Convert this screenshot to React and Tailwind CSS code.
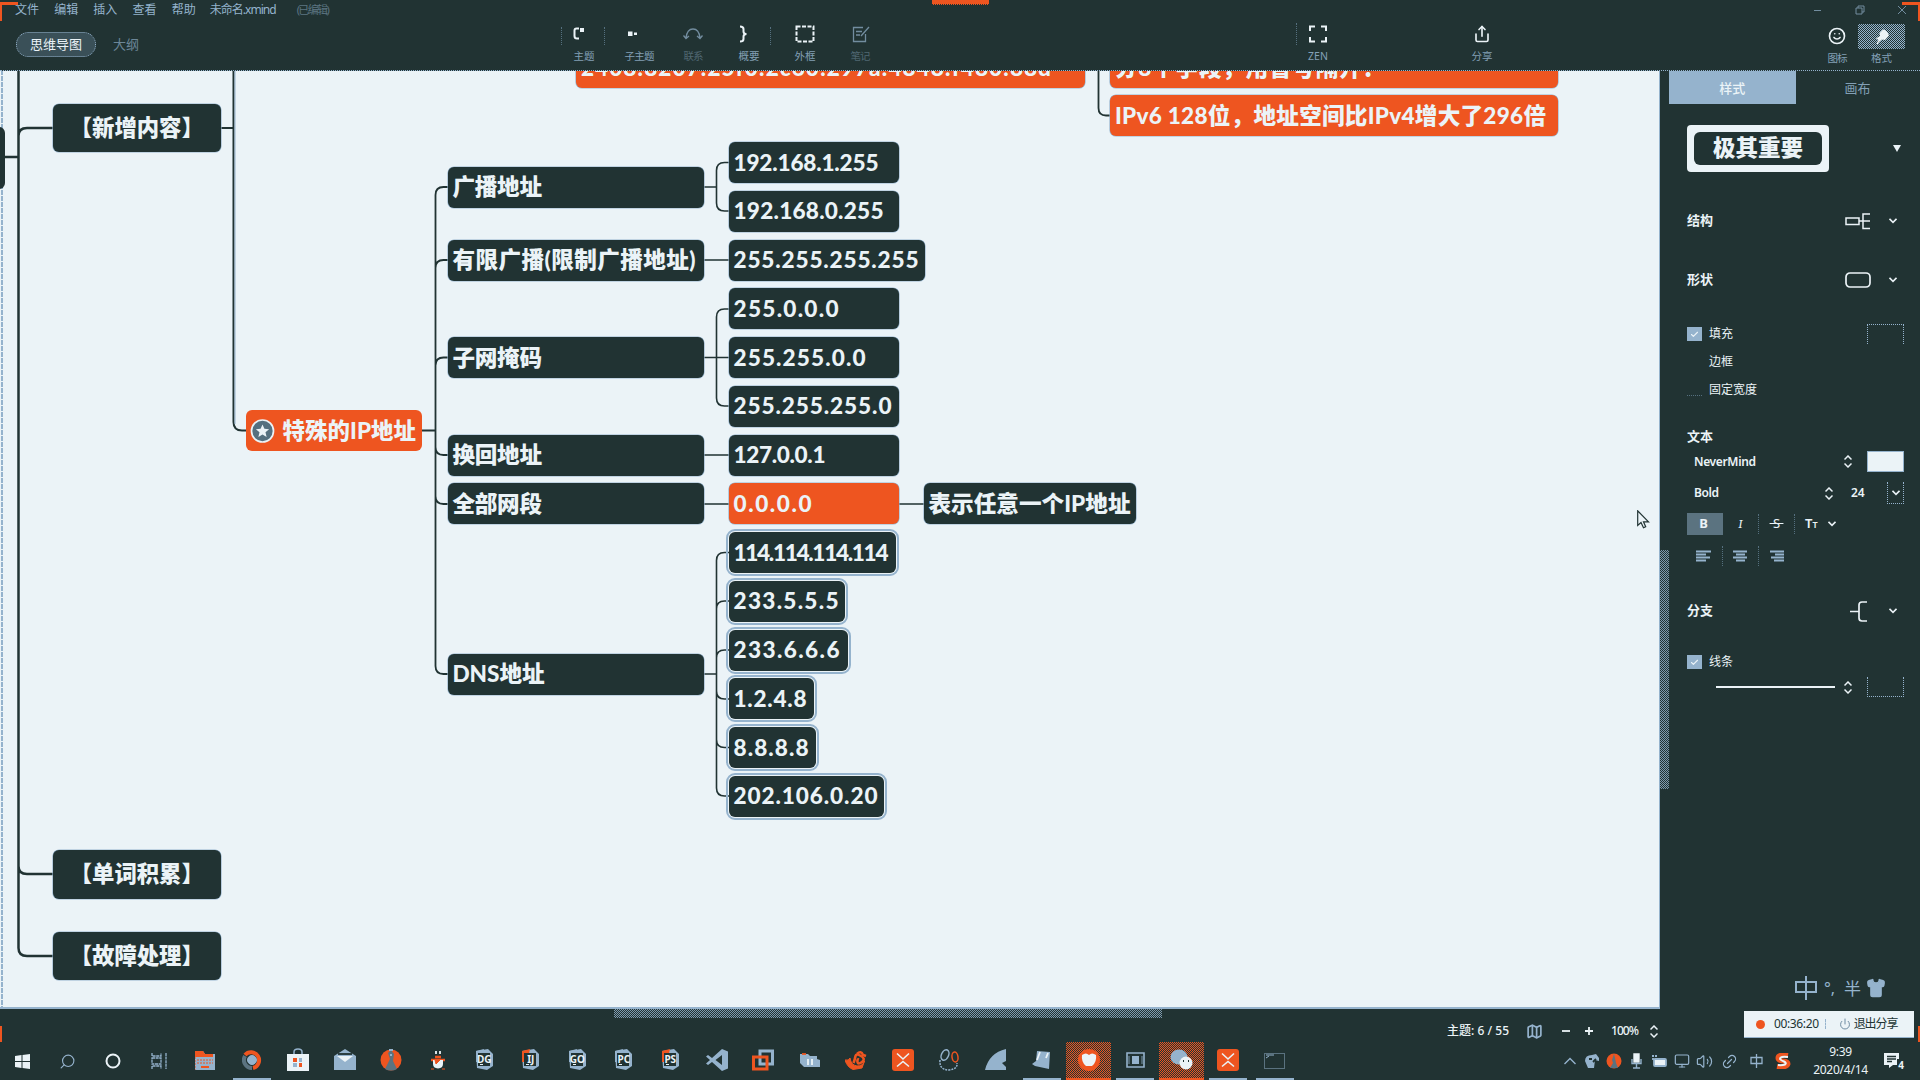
import React, { useLayoutEffect, useRef } from "react";
import { Share, Smile, Map as MapIcon, Search, Check, Power, Monitor, Volume2, Link2, Shirt } from "lucide-react";

const CHECKER = "bg-[repeating-conic-gradient(#95b3cd_0_25%,#213333_0_50%)] bg-[length:2px_2px]";
const CHECKER_ORANGE = "bg-[repeating-conic-gradient(#ee5520_0_25%,#213333_0_50%)] bg-[length:2px_2px]";

/* Text tracked so that it spans the given width. */
function Fit({ w, children, className = "" }) {
  const ref = useRef(null);
  useLayoutEffect(() => {
    const el = ref.current;
    el.style.letterSpacing = "0px";
    const n = Array.from(children).length;
    if (w && n > 1) el.style.letterSpacing = (w - el.getBoundingClientRect().width) / (n - 1) + "px";
  }, [w, children]);
  return <span ref={ref} className={"inline-block whitespace-pre " + className}>{children}</span>;
}

const NODES = [
  ["2408:8207:25f0:2c60:297a:4848:f480:88d", 576, 47, 509, 41, 470, "o"],
  ["分8个字段，用冒号隔开：", 1110, 47, 447.5, 41, 270, "o"],
  ["IPv6 128位，地址空间比IPv4增大了296倍", 1110, 95, 447.5, 41, 431, "o"],
  ["广播地址", 447.5, 166.5, 256.5, 41, 89.5],
  ["有限广播(限制广播地址)", 447.5, 239.5, 256.5, 41, 243],
  ["子网掩码", 447.5, 337, 256.5, 41, 89.5],
  ["换回地址", 447.5, 434.5, 256.5, 41, 89.5],
  ["全部网段", 447.5, 483.3, 256.5, 41, 89.5],
  ["DNS地址", 447.5, 653.8, 256.5, 41, 92],
  ["192.168.1.255", 728.5, 142, 170.5, 41, 145],
  ["192.168.0.255", 728.5, 190.7, 170.5, 41, 150],
  ["255.255.255.255", 728.5, 239.5, 196.5, 41, 185],
  ["255.0.0.0", 728.5, 288.2, 170.5, 41, 105],
  ["255.255.0.0", 728.5, 337, 170.5, 41, 132],
  ["255.255.255.0", 728.5, 385.7, 170.5, 41, 158],
  ["127.0.0.1", 728.5, 434.5, 170.5, 41, 92],
  ["0.0.0.0", 728.5, 483.3, 170.5, 41, 78, "o"],
  ["表示任意一个IP地址", 923.5, 483.3, 212.5, 41, 202],
  ["114.114.114.114", 728.5, 532, 167, 41, 155, "s"],
  ["233.5.5.5", 728.5, 580.7, 116, 41, 105, "s"],
  ["233.6.6.6", 728.5, 629.5, 119, 41, 106, "s"],
  ["1.2.4.8", 728.5, 678.2, 85, 41, 73, "s"],
  ["8.8.8.8", 728.5, 727, 87, 41, 75, "s"],
  ["202.106.0.20", 728.5, 775.8, 155.5, 41, 144, "s"],
];
const TOPICS = [["【新增内容】", 103.5], ["【单词积累】", 850], ["【故障处理】", 931.5]];

function Canvas() {
  const branch = (x0, x, x1, y0, ys) =>
    ys.map((y) => Math.abs(y - y0) < 2 ? `M${x0} ${y}H${x1}` : `M${x0} ${y0}H${x}V${y < y0 ? y + 8 : y - 8}Q${x} ${y} ${x + 8} ${y}H${x1}`).join("");
  return (
    <div className="relative w-[1660px] h-full bg-[#ebf3f7] overflow-hidden border-r border-b-2 border-[#95b3cd]">
      <div className="absolute left-0 -top-[71px] w-[1660px] h-[1080px] font-['Lato','Noto_Sans_CJK_SC',sans-serif] font-black text-[#ebf3f7]">
        <svg className="absolute inset-0" width="1660" height="1080" fill="none" stroke="#213333">
          <path d="M2 70V1008" stroke="#95b3cd" strokeWidth="2" strokeDasharray="5 1" />
          <path d="M18.5 60V948Q18.5 956 27 956H53M18.5 866Q18.5 874 27 874H53M18.5 136Q18.5 128 27 128H53M5 157H18" strokeWidth="2.5" />
          <path d="M221 128H233M233.500 60V422Q233.500 430.500 242 430.500H247" strokeWidth="2" />
          <path d="M235 70V424" stroke="#95b3cd" strokeWidth="1" />
          <path strokeWidth="1.8" d={branch(422, 435.500, 448, 430.500, [187, 260, 357.500, 455, 504, 674])} />
          <path strokeWidth="1.6" d={branch(704, 716.500, 729, 187, [162.500, 211]) + branch(704, 716, 729, 260, [260]) + branch(704, 716.500, 729, 357.500, [309, 357.500, 406]) + branch(704, 716, 729, 455, [455]) + branch(704, 716, 729, 504, [504]) + branch(899, 910, 924, 504, [504]) + branch(704, 716.500, 729, 674, [552.500, 601, 650, 699, 747.500, 796])} />
          <path d="M1098.500 60V108Q1098.500 115.500 1106 115.500H1111" strokeWidth="1.8" />
        </svg>
        <div className="absolute -left-5 top-[127px] w-[25px] h-[62px] rounded-md bg-[#213333]" />
        {TOPICS.map(([t, y]) => (
          <div key={t} className="absolute left-[52.5px] w-[168.5px] h-[48.5px] rounded-md bg-[#213333] shadow-[0_0_0_0.6px_#95b3cd] flex items-center justify-center text-[22.4px]" style={{ top: y }}>
            <Fit w={134}>{t}</Fit>
          </div>
        ))}
        <div className="absolute left-[246px] top-[410px] w-[176px] h-[41px] rounded-md bg-[#ee5520] flex items-center pl-[4px] text-[22.4px]">
          <svg width="26" height="26" viewBox="0 0 26 26"><circle cx="12.500" cy="13" r="11" fill="#55707f" stroke="#ebf3f7" strokeWidth="1.700" /><path d="M12.500 6.500l1.900 4.300 4.700.4-3.600 3.100 1.100 4.600-4.100-2.500-4.100 2.500 1.100-4.600-3.600-3.100 4.700-.4z" fill="#ebf3f7" /></svg>
          <Fit w={133.5} className="ml-[6.5px]">特殊的IP地址</Fit>
        </div>
        {NODES.map(([t, x, y, w, h, tw, kind]) => (
          <div key={t} className={"absolute rounded-md flex items-center pl-[5px] text-[22.6px] " + (kind === "o" ? "bg-[#ee5520]" : "bg-[#213333]") + (kind === "s" ? " outline outline-2 outline-offset-[1.5px] outline-[#95b3cd]" : " shadow-[0_0_0_0.6px_#95b3cd]")} style={{ left: x, top: y, width: w, height: h }}>
            <Fit w={tw}>{t}</Fit>
          </div>
        ))}
        <svg className="absolute left-[1637px] top-[510px]" width="13" height="19" viewBox="0 0 13 19"><path d="M.7 .8V15.500L4 12.500 6.500 17.800 8.700 16.700 6.500 11.800H11.500z" fill="#ebf3f7" stroke="#213333" strokeWidth="1.200" /></svg>
      </div>
    </div>
  );
}

const Tool = ({ icon, label, className, dim, tw }) => (
  <div className={"flex flex-col items-center h-[48px] pt-[2px] " + className}>
    <div className={"h-[20px] flex items-center justify-center " + (dim ? "text-[#95b3cd] opacity-70" : "text-[#ebf3f7]")}>{icon}</div>
    <div className={"mt-[5px] text-[10.5px] leading-[14px] text-[#95b3cd] whitespace-nowrap " + (dim ? "opacity-40" : "opacity-85")}><Fit w={tw}>{label}</Fit></div>
  </div>
);
const S = ({ children, w = 20, h = 20, sw = 1.8, className = "" }) => (
  <svg width={w} height={h} viewBox={`0 0 ${w} ${h}`} fill="none" stroke="currentColor" strokeWidth={sw} className={className}>{children}</svg>
);
const DOT = "border-dotted border-[#55707f]";

function Header() {
  return (
    <header className="h-[71px] flex flex-col border-b border-dotted border-[#95b3cd]">
      <div className="h-[20px] flex items-center text-[12px] text-[#95b3cd]">
        {["文件", "编辑", "插入", "查看", "帮助"].map((m, i) => <div key={m} className={i ? "ml-[15.2px]" : "ml-[15px]"}><Fit w={24}>{m}</Fit></div>)}
        <div className="ml-[14px]"><Fit w={67}>未命名.xmind</Fit></div>
        <div className="ml-[21px] text-[11px] opacity-50"><Fit w={33}>(已编辑)</Fit></div>
        <div className="ml-auto flex items-center mr-[13px] opacity-70">
          <S w={8} h={10} sw={1}><path d="M0 5.500H7" /></S>
          <S w={10} h={10} sw={1} className="ml-[33px]"><path d="M1 3H7V9H1zM3 3V1H9V7H7" /></S>
          <S w={10} h={10} sw={1} className="ml-[32px]"><path d="M1 1L9 9M9 1L1 9" /></S>
        </div>
      </div>
      <div className="h-[50px] flex items-start pt-[2px]">
        <div className="ml-[16px] mt-[10px] w-[80px] h-[25px] rounded-full border border-dotted border-[#95b3cd] bg-[#3a5058] flex items-center justify-center text-[13px] text-[#ebf3f7]"><Fit w={52}>思维导图</Fit></div>
        <div className="ml-[17px] mt-[12px] text-[13px] leading-[20px] text-[#95b3cd] opacity-65">大纲</div>
        <div className="ml-[422px] flex relative">
          <Tool className="w-[46px]" tw={21} label="主题" icon={<S sw={2} className="mr-[8px]"><path d="M9 4.500H6.500Q4.500 4.500 4.500 6.500V12Q4.500 14.500 7 14.500H9" /><path d="M10 4H14V8H10z" fill="currentColor" stroke="none" /></S>} />
          <Tool className="w-[64px]" tw={30} label="子主题" icon={<S sw={2} className="mr-[8px]"><path d="M3 7.500H7.500V12H3zM9 8.500H12V11H9z" fill="currentColor" stroke="none" /></S>} />
          <Tool className="w-[44px]" tw={20} label="联系" dim icon={<S sw={1.3}><path d="M3 14Q4 5 10 5T17 14M.5 11.500L3 14.500 6 12M14 12L17 14.500 19.500 11.500" /></S>} />
          <Tool className="w-[68px]" tw={21} label="概要" icon={<S sw={2} className="mr-[8px]"><path d="M5 2.500Q8.500 2.500 8.500 5V7.500Q8.500 10 11.500 10Q8.500 10 8.500 12.500V15Q8.500 17.500 5 17.500" /></S>} />
          <Tool className="w-[44px]" tw={21} label="外框" icon={<S sw={2}><rect x="1.500" y="2.500" width="17" height="15" strokeDasharray="4 1.500" /></S>} />
          <Tool className="w-[66px]" tw={20} label="笔记" dim icon={<S sw={1.3}><path d="M13 3.500H3.500V17.500H15.500V10M19 3L11 12M6 7.500H12M6 11H10" /></S>} />
          <i className={"absolute left-0 top-[5px] h-[18px] border-l " + DOT} />
          <i className={"absolute left-[43px] top-[5px] h-[18px] border-l " + DOT} />
          <i className={"absolute left-[209px] top-[5px] h-[18px] border-l " + DOT} />
        </div>
        <i className={"ml-[403px] mt-[1px] h-[22px] border-l " + DOT} />
        <Tool className="-ml-[2px] w-[46px]" tw={20} label="ZEN" icon={<S sw={2}><path d="M2 7V2.500H7M13 2.500H18V7M18 13V17.500H13M7 17.500H2V13" /></S>} />
        <Tool className="ml-[118px] w-[46px]" tw={21} label="分享" icon={<Share size={18} strokeWidth={2.2} />} />
        <Tool className="ml-[311px] w-[42px] mt-[2px]" tw={20} label="图标" icon={<Smile size={18} strokeWidth={2.2} />} />
        <div className="mt-[2px] w-[47px] flex flex-col items-center text-[10.5px] leading-[14px] text-[#95b3cd]">
          <div className={"w-[47px] h-[25px] flex items-center justify-center text-[#ebf3f7] " + CHECKER}><S w={16} h={16}><path d="M9 .5Q13 1 15 6.500L11 11 8 10.500 5 13 3.500 15.500 2.500 14.500 4.500 11 2 9.500 6 7 5.500 4z" fill="currentColor" stroke="none" /></S></div>
          <span className="mt-[2px] opacity-85">格式</span>
        </div>
      </div>
    </header>
  );
}

const Down = ({ className = "" }) => <S w={8} h={6} sw={1.6} className={className}><path d="M.5 .8L4 4.300 7.500 .8" /></S>;
const Step = ({ className = "" }) => <S w={8} h={13} sw={1.5} className={className}><path d="M.5 4.500L4 1 7.500 4.500M.5 8.500L4 12 7.500 8.500" /></S>;
const Box = () => <div className="w-[15px] h-[14px] bg-[#95b3cd] flex items-center justify-center text-[#ebf3f7]"><Check size={9} strokeWidth={3} /></div>;
const Align = ({ d, className }) => <S w={16} h={12} sw={2} className={"text-[#95b3cd] " + className}><path d={d} /></S>;

function Panel() {
  return (
    <aside className="w-[260px] flex text-[#ebf3f7]">
      <div className="w-[9px] pt-[479px]"><div className={"w-[9px] h-[239px] opacity-80 " + CHECKER} /></div>
      <div className="w-[251px] flex flex-col">
        <div className="flex h-[33px] items-center text-[13px]">
          <div className="w-[126.5px] h-[33px] pt-[2px] bg-[#95b3cd] flex items-center justify-center font-medium">样式</div>
          <div className="w-[124px] pt-[2px] text-center text-[#95b3cd] opacity-85">画布</div>
        </div>
        <div className="mt-[21px] ml-[18px] mr-[19px] flex items-center justify-between">
          <div className="w-[142px] h-[46.5px] rounded bg-[#ebf3f7] flex items-center justify-center">
            <div className="w-[128px] h-[33px] rounded-md bg-[#213333] flex items-center justify-center text-[22.5px] font-black"><Fit w={90}>极其重要</Fit></div>
          </div>
          <S w={8} h={7}><path d="M0 0H8L4 7z" fill="currentColor" stroke="none" /></S>
        </div>
        <div className="mt-[39px] ml-[18px] mr-[23px] h-[20px] flex items-center font-bold text-[13px]">
          <Fit w={26}>结构</Fit>
          <S w={26} h={18} sw={1.5} className="ml-auto"><path d="M1 6H14V12.500H1zM14 9H25M25 2H18V16.500H25" /></S>
          <Down className="ml-[18px]" />
        </div>
        <div className="mt-[39.5px] ml-[18px] mr-[23px] h-[20px] flex items-center font-bold text-[13px]">
          <Fit w={26}>形状</Fit>
          <S w={26} h={16} sw={1.7} className="ml-auto"><rect x="1" y="1" width="24" height="14" rx="4" /></S>
          <Down className="ml-[18px]" />
        </div>
        <div className="mt-[34px] ml-[18px] mr-[16px] h-[20px] flex items-center text-[12px]">
          <Box /><span className="ml-[7px]">填充</span>
          <div className="ml-auto w-[37px] h-[20px] border border-dotted border-[#95b3cd] border-b-0" />
        </div>
        <div className="mt-[8px] ml-[40px] h-[20px] leading-[20px] text-[12px]">边框</div>
        <div className="mt-[8px] ml-[18px] h-[20px] flex items-center text-[12px]">
          <i className="w-[15px] h-[12px] border-b border-dotted border-[#55707f]" /><span className="ml-[7px]">固定宽度</span>
        </div>
        <div className="mt-[26px] ml-[18px] h-[20px] leading-[20px] text-[13px] font-bold">文本</div>
        <div className="mt-[5px] ml-[25px] mr-[16px] h-[21px] flex items-center text-[12px] font-semibold">
          <Fit w={62}>NeverMind</Fit><Step className="ml-auto" />
          <div className="ml-[15px] w-[37px] h-[21px] bg-[#ebf3f7] border border-[#95b3cd]" />
        </div>
        <div className="mt-[10px] ml-[25px] mr-[16px] h-[22px] flex items-center text-[12px] font-semibold">
          <Fit w={25}>Bold</Fit><Step className="ml-auto" />
          <span className="ml-[18px] w-[16px]">24</span>
          <div className="ml-[20px] w-[17px] h-[22px] border border-dotted border-[#95b3cd] border-t-0 flex items-center justify-center"><Down /></div>
        </div>
        <div className="mt-[9px] ml-[18px] h-[22px] flex items-center text-[13px]">
          <div className="w-[36px] h-[22px] bg-[#5b7380] flex items-center justify-center pr-[3px] font-bold">B</div>
          <div className={"w-[36px] h-[20px] flex items-center justify-center border-r italic font-serif " + DOT}>I</div>
          <div className={"w-[36px] h-[20px] flex items-center justify-center border-r " + DOT}><span className="line-through">&nbsp;S&nbsp;</span></div>
          <div className="ml-[10px] flex items-baseline font-semibold">T<span className="text-[9px]">T</span></div>
          <Down className="ml-[10px]" />
        </div>
        <div className="mt-[11px] ml-[18px] h-[20px] flex items-center">
          <div className={"w-[36px] h-[20px] border-r flex items-center pl-[9px] " + DOT}><Align d="M0 1.500H15M0 4.500H10M0 7.500H14M0 10.500H10" /></div>
          <div className={"w-[36px] h-[20px] border-r flex items-center pl-[10px] " + DOT}><Align d="M0 1.500H14M3 4.500H12M0 7.500H14M3 10.500H12" /></div>
          <div className="pl-[11px]"><Align d="M0 1.500H14M5 4.500H14M1 7.500H14M4 10.500H14" /></div>
        </div>
        <div className="mt-[34px] ml-[18px] mr-[23px] h-[22px] flex items-center font-bold text-[13px]">
          <Fit w={26}>分支</Fit>
          <S w={18} h={21} sw={1.7} className="ml-auto"><path d="M0 10.500H9M17 1H12Q9 1 9 4V17Q9 20 12 20H17" /></S>
          <Down className="ml-[21px]" />
        </div>
        <div className="mt-[30px] ml-[18px] h-[20px] flex items-center text-[12px]"><Box /><span className="ml-[7px]">线条</span></div>
        <div className="mt-[5px] ml-[47px] mr-[16px] h-[20px] flex items-center">
          <div className="w-[119px] h-[2px] bg-[#ebf3f7]" /><Step className="ml-[9px]" />
          <div className="ml-auto w-[37px] h-[20px] border border-dotted border-[#95b3cd] border-t-0" />
        </div>
        <div className="mt-[279px] ml-[126px] h-[24px] flex items-center text-[#95b3cd]">
          <S w={22} h={24} sw={2}><path d="M1 6H21V16H1zM11 0V24" /></S>
          <span className="ml-[7px] text-[16px] leading-none w-[20px]">°,</span>
          <span className="text-[17px] leading-none w-[17px]">半</span>
          <Shirt size={20} fill="currentColor" className="ml-[5px]" />
        </div>
        <div className="mt-[11px] ml-[75px] w-[170px] h-[27px] bg-[#ebf3f7] border-b border-[#95b3cd] flex items-center text-[12px] text-[#213333]">
          <i className="ml-[12px] w-[9px] h-[9px] rounded-full bg-[#ee5520]" />
          <Fit w={45} className="ml-[9px]">00:36:20</Fit>
          <i className="ml-[6px] h-[10px] border-l border-dashed border-[#95b3cd]" />
          <Power size={12} strokeWidth={2} className="ml-[13px] text-[#6f8ca3]" />
          <Fit w={45} className="ml-[3px]">退出分享</Fit>
        </div>
      </div>
    </aside>
  );
}

const JB = ({ t, c = "#95b3cd" }) => (
  <div className="relative w-[19px] h-[22px] flex items-center justify-center">
    <svg className="absolute inset-0" width="19" height="22" viewBox="0 0 19 22"><path d="M1 2L13 0 18 5V17L12 21 2 19z" fill="#95b3cd" /><path d="M1 2L9 0 6 13H1z" fill={c} /><path d="M3 4H15V17H3z" fill="#213333" /><path d="M5 15.500H8" stroke="#ebf3f7" /></svg>
    <span className="relative text-[10px] font-bold text-[#ebf3f7] leading-none -mt-[3px]">{t}</span>
  </div>
);
const XM = () => <S w={22} h={22} sw={1.6} className="text-[#ebf3f7]"><rect width="22" height="22" rx="3" fill="#ee5520" stroke="none" /><path d="M5 4.500L11 10 17 4.500M5 17.500L11 12.500 17 17.500" /></S>;
const O = "#ee5520", B = "#95b3cd", W = "#ebf3f7", D = "#213333";

const APPS = [
  [<S w={20} h={22} sw={1}><path d="M0 2H8L10 5H20V21H0z" fill={B} stroke="none" /><path d="M0 2H8L10 5H18V8H0z" fill={O} stroke="none" /><path d="M0 8V21M2 11H18M2 14H18" stroke={O} strokeDasharray="2 1" /><path d="M6 18H14" stroke={O} strokeWidth="2" /></S>],
  [<S w={20} h={22} sw={4}><path d="M3 6A8 8 0 1 1 11 19" stroke={O} /><path d="M3 7A8 8 0 0 0 10 19" stroke="#5b7380" /><circle cx="10" cy="11" r="4.500" fill={B} stroke={B} strokeWidth="1" /></S>, "b"],
  [<S w={22} h={24} sw={1.5}><path d="M7 7V4Q7 1 11 1T15 4V7" stroke={B} /><path d="M0 6H22V23H0z" fill={W} stroke="none" /><path d="M6 10H10V14H6zM12 15H15V19H12z" fill={O} stroke="none" /><path d="M12 10H15V14H12zM6 15H10V19H6z" fill={B} stroke="none" /></S>],
  [<S w={22} h={22}><path d="M0 7L11 0 22 7V21H0z" fill={B} stroke="none" /><path d="M3 7H19L11 13z" fill={W} stroke="none" /><path d="M4 5H18" stroke={D} /></S>],
  [<S w={22} h={22}><circle cx="11" cy="11" r="10.500" fill={O} stroke="none" /><path d="M11 1L8 4 10 10 5 20Q11 23 17 20L13 12 14 5z" fill="#5b7380" stroke="none" /><path d="M9 1H13M10 6H12" stroke={B} /></S>],
  [<S w={16} h={20}><path d="M6 1V4M10 1V4" stroke={W} /><path d="M5 7H11M1 10H15" stroke={O} strokeWidth="2.500" /><path d="M3 10H13V14Q13 18 8 18.500 3 18 3 14z" fill={W} stroke="none" /><path d="M5 10H10L6 14zM1 19H4M12 19H15" fill={O} stroke={O} strokeWidth="1" /></S>],
  [<JB t="DG" />], [<JB t="IJ" c={O} />], [<JB t="GO" />], [<JB t="PC" />], [<JB t="PS" c={O} />],
  [<S w={22} h={22}><path d="M16 0L22 2.500V19.500L16 22 6 13 2 16 0 14.500 4 11 0 7.500 2 6 6 9zM16 6L9.500 11 16 16z" fill={B} fillRule="evenodd" stroke="none" /></S>],
  [<S w={22} h={22} sw={3}><path d="M8 2H20.500V15H8z" stroke={B} /><path d="M1.500 8H15V20H1.500z" stroke={O} /></S>],
  [<S w={20} h={16}><path d="M0 2H8L10 4H17V7L20 8V15H4L0 11z" fill={B} stroke="none" /><path d="M2 2H6" stroke={O} /><path d="M8 7V13M12 7V13" stroke={W} /></S>],
  [<S w={22} h={20} sw={2.6}><path d="M14 9.500Q12 9 12.500 12T17 12 16 6 10.500 6 8.500 13" stroke={O} /><path d="M0 10Q4 11 5 8Q6 15 12 16 18 16 19.500 11L17 18 8 19.500Q2 17 0 10z" fill={O} stroke={O} strokeWidth="1" /><path d="M12 4Q16 0 18 5L21 6" stroke={O} /></S>],
  [<XM />],
  [<S w={22} h={22} sw={1.5}><ellipse cx="7" cy="6" rx="3.500" ry="5.500" stroke={B} transform="rotate(25 7 6)" /><ellipse cx="17" cy="8" rx="3" ry="5" stroke={O} transform="rotate(-8 17 8)" /><path d="M2 11Q1 21 11 21 20 20 19 14" stroke={B} strokeDasharray="2 1" /></S>],
  [<S w={22} h={22}><path d="M0 21Q4 4 21 0V12L17 14 21 18V21z" fill={B} stroke="none" /></S>],
  [<S w={20} h={20}><path d="M5 1L18 2 17 19 3 16 0 14 4 11z" fill={B} stroke="none" /><path d="M5 10L8 2M16 3L14 8" stroke={W} /></S>, "b"],
  [<S w={24} h={24}><circle cx="12" cy="12" r="11" fill={O} stroke="none" /><path d="M5 7Q9 4 12 7 15 4 19 7 20 14 15 18H9Q4 14 5 7z" fill={W} stroke="none" /></S>, "h"],
  [<S w={19} h={16} sw={1.6}><path d="M1 1H18V15H1z" stroke={B} /><path d="M6 4H13V12H6z" fill={B} stroke="none" /><path d="M3 4V12M16 4V12" stroke="#5b7380" /></S>, "b"],
  [<S w={24} h={22}><ellipse cx="9" cy="8" rx="8.500" ry="7.500" fill={B} stroke="none" /><circle cx="16" cy="14" r="6.500" fill={W} stroke="none" /><path d="M13 12H14M18 12H19" stroke={D} /></S>, "h"],
  [<XM />, "b"],
  [<S w={21} h={17} sw={1}><path d="M.5 1.500H20.500V16.500H.5z" stroke={B} strokeDasharray="1 1" /><path d="M2 3H10M2 6L5 4" stroke={B} /></S>, "b"],
];

function Tray({ children, className }) {
  return <div className={"h-[38px] flex items-center justify-center text-[#95b3cd] " + className}>{children}</div>;
}

function Taskbar() {
  return (
    <footer className="h-[38px] flex text-[#ebf3f7]">
      <div className="w-[45px] flex items-center justify-center"><S w={15} h={15}><path d="M0 2L6.500 1V7H0zM7.500 1L15 0V7H7.500zM0 8H6.500V14L0 13zM7.500 8H15V15L7.500 14z" fill="currentColor" stroke="none" /></S></div>
      <div className="w-[45px] flex items-center justify-center text-[#95b3cd]"><Search size={17} strokeWidth={1.6} className="-scale-x-100" /></div>
      <div className="w-[45px] flex items-center justify-center"><S w={16} h={16} sw={2}><circle cx="8" cy="8" r="6.500" /></S></div>
      <div className="w-[47px] flex items-center justify-center text-[#95b3cd]"><S w={16} h={16} sw={1.3}><path d="M1 0V3H10V0M1 16V13H10V16M1 5H10V11H1zM15 0V16" strokeDasharray="3 .6" /></S></div>
      {APPS.map(([icon, k], i) => (
        <div key={i} className="w-[46.5px] h-[38px] flex justify-center">
          <div className={"h-[38px] flex items-center justify-center border-b-2 " + (k === "h" ? "w-[45px] border-[#ee5520] " + CHECKER_ORANGE : k === "b" ? "w-[38px] border-[#95b3cd]" : "w-[38px] border-transparent")}>{icon}</div>
        </div>
      ))}
      <Tray className="ml-[260px] w-[23px]"><S w={12} h={8} sw={1.4}><path d="M.5 7L6 1.500 11.500 7" /></S></Tray>
      <Tray className="w-[22px]"><S w={16} h={16}><path d="M1 8Q1 2 8 2L12 1 15 5V8L11 7 10 15H4z" fill={B} stroke="none" /><path d="M5 6H8M9 9L12 6" stroke={D} /></S></Tray>
      <Tray className="w-[22px]"><S w={16} h={16}><circle cx="8" cy="8" r="7.500" fill={O} stroke="none" /><path d="M8 1L6 7 7 10 4 15H12L10 10 9 5z" fill="#5b7380" stroke="none" /></S></Tray>
      <Tray className="w-[23px]"><S w={11} h={16} sw={1.4}><path d="M3 1H8V9H3z" fill={W} stroke={W} /><path d="M1 6V10.500H10V6M5.500 11V15M2 15H9" /></S></Tray>
      <Tray className="w-[22px]"><S w={16} h={13}><path d="M1 1H7M2 3V6" strokeDasharray="2 1" /><rect x="3" y="4" width="12" height="7" rx="1" fill={W} /></S></Tray>
      <Tray className="w-[23px]"><Monitor size={16} strokeWidth={1.8} /></Tray>
      <Tray className="w-[23px]"><Volume2 size={17} strokeWidth={1.7} /></Tray>
      <Tray className="w-[26px]"><Link2 size={17} strokeWidth={1.7} className="-rotate-45" /></Tray>
      <Tray className="w-[28px]"><S w={13} h={14} sw={1.3}><path d="M1 3.500H12V9.500H1zM6.500 0V14" /></S></Tray>
      <Tray className="w-[26px]"><S w={16} h={16} sw={2.600}><path d="M13 2.500Q3 1 3 5 3 7.500 8 8T13 11Q12 15 2 13.500" stroke={O} strokeWidth="5" /><path d="M13 4Q5 3 5 6 6 7.500 9 8.500 12 10 10 11.500 7 12.500 3 12" stroke={W} strokeWidth="2" /></S></Tray>
      <div className="w-[88px] pl-[1px] pt-[1px] text-center text-[12px] leading-[18px] text-[#ebf3f7]"><div><Fit w={23}>9:39</Fit></div><div><Fit w={55}>2020/4/14</Fit></div></div>
      <div className="flex items-center"><div className="relative w-[18px] h-[18px] text-[#213333]"><S w={18} h={18} sw={1.3}><path d="M0 1H15V13H9L5 16V13H0z" fill={W} stroke="none" /><path d="M3 4.500H12M3 7H12M3 9.500H8" /></S><span className="absolute -right-[3px] top-[7px] px-[1px] bg-[#213333] text-[#ebf3f7] text-[10px] leading-[12px] font-bold">4</span></div></div>
    </footer>
  );
}

export default function App() {
  return (
    <div className="relative w-[1920px] h-[1080px] overflow-hidden bg-[#213333] flex flex-col font-['Noto_Sans','Noto_Sans_CJK_SC',sans-serif]">
      <Header />
      <div className="h-[971px] flex">
        <div className="w-[1660px] flex flex-col">
          <div className="h-[938px]"><Canvas /></div>
          <div className="h-[33px] flex items-start">
            <div className={"ml-[614px] w-[548px] h-[9px] opacity-80 " + CHECKER} />
            <div className="ml-[285px] mt-[11px] flex items-center text-[12px] leading-[22px] text-[#ebf3f7] font-medium">
              <Fit w={62}>主题: 6 / 55</Fit>
              <MapIcon size={17} strokeWidth={2.4} className="ml-[17px] text-[#95b3cd]" />
              <S w={10} h={10} sw={1.8} className="ml-[18px]"><path d="M1 5H9" /></S>
              <S w={10} h={10} sw={1.8} className="ml-[13px]"><path d="M1 5H9M5 1V9" /></S>
              <Fit w={28} className="ml-[17px]">100%</Fit>
              <Step className="ml-[12px]" />
            </div>
          </div>
        </div>
        <Panel />
      </div>
      <Taskbar />
      <i className="absolute left-0 top-[2px] w-[18px] h-[19px] border-t-[3px] border-l-2 border-[#ee5520]" />
      <i className="absolute right-0 top-[2px] w-[18px] h-[19px] border-t-[3px] border-r-2 border-[#ee5520]" />
      <i className="absolute left-0 top-[1026px] w-[2px] h-[16px] bg-[#ee5520]" />
      <i className="absolute right-0 top-[1026px] w-[2px] h-[16px] bg-[#ee5520]" />
      <i className="absolute left-[932px] top-0 w-[57px] h-[5px] bg-[#ee5520] border-b border-dotted border-[#213333]" />
    </div>
  );
}
